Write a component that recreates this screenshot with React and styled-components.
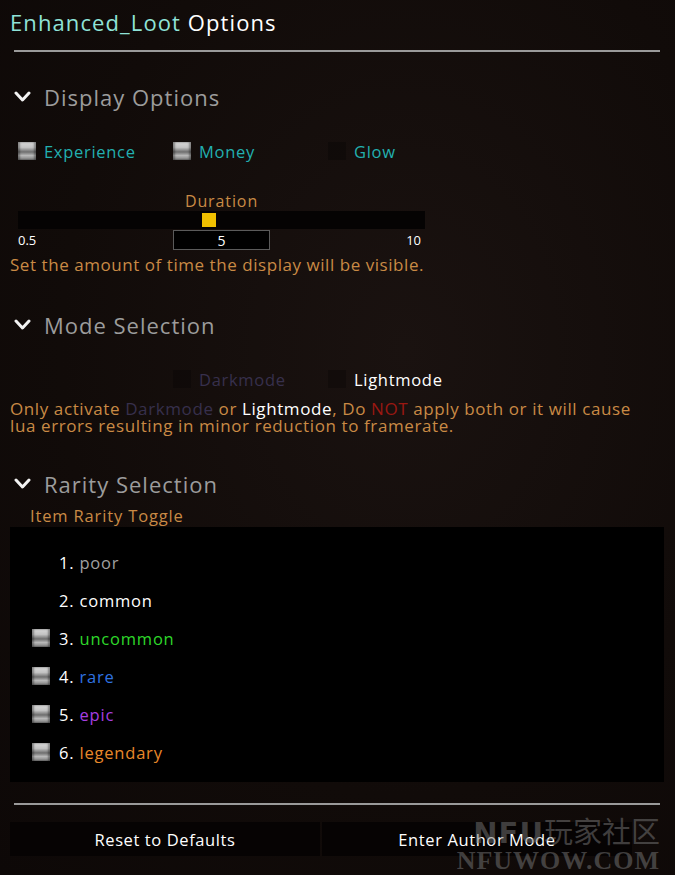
import React from "react";
import styled, { createGlobalStyle } from "styled-components";

const Global = createGlobalStyle`
  html, body {
    margin: 0;
    padding: 0;
    background: #110b09;
  }
  body {
    font-family: "Open Sans", Lato, sans-serif;
    color: #fff;
  }
`;

const Page = styled.div`
  position: relative;
  width: 675px;
  height: 875px;
  overflow: hidden;
  background: radial-gradient(ellipse at 60% 40%, #1a1210 0%, #110b09 60%, #0d0807 100%);
`;

const Title = styled.h1`
  margin: 8px 0 0 10px;
  font-size: 22px;
  line-height: 28px;
  font-weight: 400;
  letter-spacing: 1.1px;
  color: #fff;
  span {
    color: #8fe3d8;
  }
`;

const Divider = styled.div`
  height: 2px;
  background: #9a9a9a;
  margin: ${(p) => p.$top}px 15px 0 14px;
`;

const Header = styled.div`
  display: flex;
  align-items: center;
  gap: 13px;
  margin: ${(p) => p.$top}px 0 0 14px;
  height: 30px;
  font-size: 22px;
  letter-spacing: 1px;
  color: #9c9c9c;
`;

const Row = styled.div`
  display: grid;
  grid-template-columns: repeat(3, 155px);
  margin: ${(p) => p.$top}px 0 0 18px;
  height: 24px;
`;

const Option = styled.div`
  display: flex;
  align-items: center;
  gap: 8px;
  font-size: 16.5px;
  letter-spacing: 0.7px;
  color: ${(p) => p.$color};
`;

const Box = styled.span`
  width: 18px;
  height: 18px;
  flex-shrink: 0;
  background: ${(p) =>
    p.$hidden
      ? "rgba(0,0,0,0.25)"
      : "linear-gradient(to bottom, #d8d8d8 0%, #c4c4c4 30%, #6e6e6e 55%, #b8b8b8 75%, #7c7c7c 100%)"};
  box-shadow: ${(p) => (p.$hidden ? "none" : "inset 2px 0 2px rgba(0,0,0,0.35), inset -2px 0 2px rgba(0,0,0,0.35)")};
`;

const Slider = styled.div`
  width: 407px;
  margin-left: 18px;
`;

const SliderLabel = styled.div`
  margin-top: 28px;
  text-align: center;
  font-size: 16px;
  line-height: 20px;
  letter-spacing: 0.9px;
  color: #c98a45;
`;

const Track = styled.div`
  position: relative;
  height: 18px;
  background: #050303;
`;

const Thumb = styled.span`
  position: absolute;
  top: 2px;
  width: 14px;
  height: 14px;
  background: #f0c000;
`;

const ValueRow = styled.div`
  display: grid;
  grid-template-columns: 1fr 97px 1fr;
  align-items: center;
  margin-top: 1px;
  height: 20px;
  font-size: 13px;
`;

const ValueBox = styled.div`
  height: 18px;
  border: 1px solid #5a5a5a;
  background: #000;
  text-align: center;
  line-height: 20px;
  font-size: 14px;
`;

const Max = styled.span`
  text-align: right;
  padding-right: 4px;
`;

const Note = styled.p`
  margin: ${(p) => p.$top}px 0 0 10px;
  font-size: 17px;
  line-height: ${(p) => p.$lh || 20}px;
  letter-spacing: ${(p) => p.$ls || 0.55}px;
  color: #c98a45;
  width: 660px;
`;

const Colored = styled.span`
  color: ${(p) => p.$color};
`;

const Subtitle = styled.div`
  margin: 7px 0 0 30px;
  font-size: 16.5px;
  line-height: 20px;
  letter-spacing: 0.85px;
  color: #c98a45;
`;

const RarityPanel = styled.div`
  margin: 1px 11px 0 10px;
  height: 255px;
  box-sizing: border-box;
  padding: 16px 0 0 22px;
  background: #000;
`;

const RarityRow = styled.div`
  display: flex;
  align-items: center;
  gap: 9px;
  height: 38px;
  font-size: 16.5px;
  letter-spacing: 0.8px;
  color: #fff;
`;

const Buttons = styled.div`
  display: grid;
  grid-template-columns: 310px 310px;
  gap: 2px;
  margin: 17px 0 0 10px;
`;

const Button = styled.button`
  height: 34px;
  border: none;
  background: #060303;
  color: #fff;
  font-family: "Open Sans", Lato, sans-serif;
  font-size: 16.5px;
  letter-spacing: 0.6px;
  cursor: pointer;
`;

const Watermark = styled.div`
  position: absolute;
  right: 15px;
  bottom: 2px;
  display: flex;
  flex-direction: column;
  align-items: flex-end;
  pointer-events: none;
  color: rgba(120, 120, 120, 0.5);
`;

const MarkTop = styled.div`
  font-family: "Noto Sans CJK SC", sans-serif;
  font-size: 29px;
  line-height: 32px;
  b {
    font-family: "DejaVu Sans", sans-serif;
    font-weight: 700;
    letter-spacing: 1px;
  }
`;

const MarkBottom = styled.div`
  font-family: "Liberation Serif", serif;
  font-weight: 700;
  font-size: 26px;
  line-height: 24px;
  letter-spacing: 1px;
`;

const Chevron = () => (
  <svg width="17" height="12" viewBox="0 0 17 12">
    <polyline points="2,2 8.5,9 15,2" fill="none" stroke="#f2f2f2" strokeWidth="3" strokeLinecap="round" strokeLinejoin="round" />
  </svg>
);

const rarities = [
  { n: "1.", name: "poor", color: "#a0a0a0", box: false },
  { n: "2.", name: "common", color: "#ffffff", box: false },
  { n: "3.", name: "uncommon", color: "#2ed82a", box: true },
  { n: "4.", name: "rare", color: "#2f72e0", box: true },
  { n: "5.", name: "epic", color: "#a63ee0", box: true },
  { n: "6.", name: "legendary", color: "#e8882a", box: true },
];

const min = 0.5;
const max = 10;
const value = 5;

export default function App() {
  const pct = (value - min) / (max - min);
  return (
    <Page>
      <Global />
      <Title>
        <span>Enhanced_Loot</span> Options
      </Title>
      <Divider $top={14} />

      <Header $top={30}>
        <Chevron /> Display Options
      </Header>
      <Row $top={27}>
        <Option $color="#22b0b0"><Box />Experience</Option>
        <Option $color="#22b0b0"><Box />Money</Option>
        <Option $color="#22b0b0"><Box $hidden />Glow</Option>
      </Row>
      <Slider>
        <SliderLabel>Duration</SliderLabel>
        <Track>
          <Thumb style={{ left: `calc(${pct * 100}% - ${pct * 14}px - 2px)` }} />
        </Track>
        <ValueRow>
          <span>0.5</span>
          <ValueBox>5</ValueBox>
          <Max>10</Max>
        </ValueRow>
      </Slider>
      <Note $top={5}>Set the amount of time the display will be visible.</Note>

      <Header $top={35}>
        <Chevron /> Mode Selection
      </Header>
      <Row $top={27}>
        <span />
        <Option $color="#37304c"><Box $hidden />Darkmode</Option>
        <Option $color="#ffffff"><Box $hidden />Lightmode</Option>
      </Row>
      <Note $top={9} $lh={17} $ls={0.6}>
        Only activate <Colored $color="#37304c">Darkmode</Colored> or{" "}
        <Colored $color="#ffffff">Lightmode</Colored>, Do <Colored $color="#9a1812">NOT</Colored> apply both or it will cause
        <br />
        lua errors resulting in minor reduction to framerate.
      </Note>

      <Header $top={35}>
        <Chevron /> Rarity Selection
      </Header>
      <Subtitle>Item Rarity Toggle</Subtitle>
      <RarityPanel>
        {rarities.map((r) => (
          <RarityRow key={r.n}>
            <Box $hidden={!r.box} />
            <span>
              {r.n} <Colored $color={r.color}>{r.name}</Colored>
            </span>
          </RarityRow>
        ))}
      </RarityPanel>

      <Divider $top={21} />
      <Buttons>
        <Button>Reset to Defaults</Button>
        <Button>Enter Author Mode</Button>
      </Buttons>

      <Watermark>
        <MarkTop><b>NFU</b>玩家社区</MarkTop>
        <MarkBottom>NFUWOW.COM</MarkBottom>
      </Watermark>
    </Page>
  );
}
